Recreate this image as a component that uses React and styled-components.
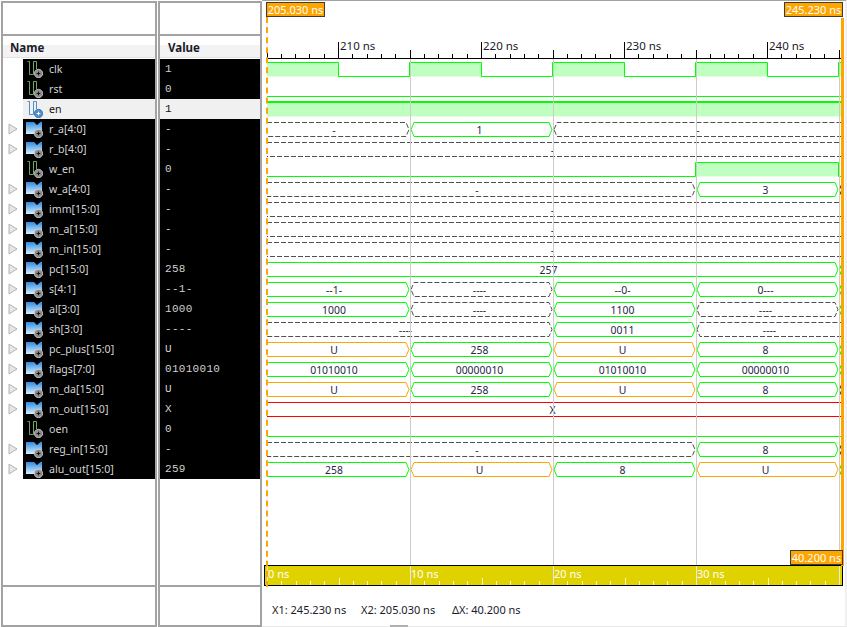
import React from "react"
import styled, { createGlobalStyle } from "styled-components"

const GlobalStyle = createGlobalStyle`
  html, body { margin: 0; padding: 0; background: #fff; }
`

const UI_FONT = `"Noto Sans", "Open Sans", sans-serif`
const GREEN = "#00ff00"
const ORANGE = "#ffa500"
const RED = "#ff0000"
const DASH = "#505050"

const Page = styled.div`
  position: relative;
  width: 847px;
  height: 627px;
  overflow: hidden;
  display: flex;
  font-family: ${UI_FONT};
  background: #fff;
`

const Pane = styled.div`
  box-sizing: border-box;
  flex: none;
  width: ${props => props.$width}px;
  height: 626px;
  margin: 1px ${props => props.$right}px 0 ${props => props.$left}px;
  border: 2px solid #a3a3a3;
  display: flex;
  flex-direction: column;
`

const PaneTop = styled.div`
  height: 31px;
  border-bottom: 2px solid #a3a3a3;
`

const PaneHeader = styled.div`
  box-sizing: border-box;
  height: 23px;
  padding: 3px 0 0 ${props => props.$indent}px;
  font-size: 11.5px;
  line-height: 17px;
  font-weight: 700;
  color: #1a1a2a;
  background: linear-gradient(#fff 0 9px, #f3f3f3 9px 21px, #e2e2e2 21px 22px, #fff 22px);
`

const List = styled.div`
  flex: 1;
`

const PaneFoot = styled.div`
  height: 38px;
  border-top: 2px solid #a3a3a3;
`

const Row = styled.div`
  display: flex;
  height: 20px;
`

const Expander = styled.div`
  width: 20px;
  display: flex;
  align-items: center;
  padding-left: 5px;
  box-sizing: border-box;
`

const NameCell = styled.div`
  flex: 1;
  display: flex;
  align-items: center;
  gap: 6px;
  padding-left: 3px;
  font-size: 10.6px;
  line-height: 18px;
  background: ${props => (props.$selected ? "#f0f0f0" : "#000")};
  color: ${props => (props.$selected ? "#101010" : "#d4d4d4")};
`

const NameText = styled.span`
  margin-top: -1px;
`

const ValueCell = styled.div`
  height: 20px;
  padding-left: 5px;
  font-family: "Liberation Mono", "DejaVu Sans Mono", monospace;
  font-size: 11px;
  letter-spacing: 0.3px;
  line-height: 20px;
  background: ${props => (props.$selected ? "#f0f0f0" : "#000")};
  color: ${props => (props.$selected ? "#101010" : "#d0d0d0")};
`

const WavePane = styled.div`
  position: relative;
  box-sizing: border-box;
  flex: none;
  width: 585px;
  height: 627px;
  border-top: 1px solid #a3a3a3;
  border-right: 2px solid #f0f0f0;
  border-bottom: 1px solid #e8e8e8;
  display: flex;
  flex-direction: column;
`

const Drawing = styled.svg`
  display: block;
  flex: none;
  font-family: ${UI_FONT};
`

const Status = styled.div`
  flex: 1;
  display: flex;
  padding: 16px 0 0 10px;
  font-size: 11px;
  line-height: 16px;
  color: #1a1a2a;
  white-space: nowrap;
`

const StatusItem = styled.span`
  width: ${props => props.$width}px;
  flex: none;
`

const CursorTag = styled.div`
  position: absolute;
  box-sizing: border-box;
  top: ${props => props.$top}px;
  left: ${props => props.$left}px;
  width: ${props => props.$width}px;
  height: 15px;
  border: 1px solid #3c3c3c;
  background: ${ORANGE};
  color: #fff;
  font-size: 11px;
  line-height: 13px;
  text-align: center;
  white-space: nowrap;
`

const Cursor = styled.div`
  position: absolute;
  left: ${props => props.$left}px;
  top: ${props => props.$top}px;
  height: ${props => props.$height}px;
  width: 0;
  border-left: ${props => props.$size}px ${props => props.$kind} ${ORANGE};
`

const Grip = styled.div`
  position: absolute;
  left: 128px;
  bottom: -1px;
  width: 18px;
  height: 2px;
  background: #b0b0b0;
`

const ChevronIcon = () => (
  <svg width="10" height="12" viewBox="0 0 10 12">
    <path d="M1 1 L9 6 L1 11 Z" fill="#e6e6e6" stroke="#b4b4b4" />
  </svg>
)

const Disc = ({ blue }) => (
  <g>
    <circle cx="12.5" cy="12.5" r="4.2" fill={blue ? "#4f8fd0" : "#8c8c8c"} stroke={blue ? "#2f6fb0" : "#d0d0d0"} strokeWidth="0.8" />
    <path d="M10.7 12.5 H14.3 M12.5 10.7 V14.3" stroke={blue ? "#fff" : "#101010"} strokeWidth="1" />
  </g>
)

const PulseIcon = ({ blue }) => (
  <svg width="17" height="17" viewBox="0 0 17 17">
    <path
      d="M1.5 0.5 H3.5 V13.5 H7.5 V0.5 H10.5 V8"
      fill="none"
      stroke={blue ? "#4f8fc8" : "#6fa562"}
    />
    <Disc blue={blue} />
  </svg>
)

const BusIcon = () => (
  <svg width="17" height="17" viewBox="0 0 17 17">
    <defs>
      <linearGradient id="busBlue" x1="0" y1="0" x2="0" y2="1">
        <stop offset="0" stopColor="#2a86dc" />
        <stop offset="1" stopColor="#d8f0ff" />
      </linearGradient>
    </defs>
    <path d="M0 1 H8 L11 4 L15 0.5 L16 1 V13 H0 Z" fill="url(#busBlue)" />
    <Disc />
  </svg>
)

const signals = [
  { name: "clk", value: "1", icon: "pulse" },
  { name: "rst", value: "0", icon: "pulse" },
  { name: "en", value: "1", icon: "pulse", selected: true },
  { name: "r_a[4:0]", value: "-", icon: "bus" },
  { name: "r_b[4:0]", value: "-", icon: "bus" },
  { name: "w_en", value: "0", icon: "pulse" },
  { name: "w_a[4:0]", value: "-", icon: "bus" },
  { name: "imm[15:0]", value: "-", icon: "bus" },
  { name: "m_a[15:0]", value: "-", icon: "bus" },
  { name: "m_in[15:0]", value: "-", icon: "bus" },
  { name: "pc[15:0]", value: "258", icon: "bus" },
  { name: "s[4:1]", value: "--1-", icon: "bus" },
  { name: "al[3:0]", value: "1000", icon: "bus" },
  { name: "sh[3:0]", value: "----", icon: "bus" },
  { name: "pc_plus[15:0]", value: "U", icon: "bus" },
  { name: "flags[7:0]", value: "01010010", icon: "bus" },
  { name: "m_da[15:0]", value: "U", icon: "bus" },
  { name: "m_out[15:0]", value: "X", icon: "bus" },
  { name: "oen", value: "0", icon: "pulse" },
  { name: "reg_in[15:0]", value: "-", icon: "bus" },
  { name: "alu_out[15:0]", value: "259", icon: "bus" }
]

// x of the clock periods, everything on screen is in page coordinates
const GRID = [410.5, 553.5, 696.5, 839.5]
const EDGE_START = 267
const EDGE_END = 842

const seg = (from, to, kind, label) => ({ from, to, kind, label })

// from/to are indexes: 0 = left cursor, 1..3 = grid lines, 4 = right edge closed, 5 = open end
const waves = [
  { type: "clock" },
  { type: "low" },
  { type: "high" },
  { type: "bus", segs: [seg(0, 1, "d", "-"), seg(1, 2, "g", "1"), seg(2, 5, "d", "-")] },
  { type: "bus", segs: [seg(0, 5, "d", "-")] },
  { type: "late" },
  { type: "bus", segs: [seg(0, 3, "d", "-"), seg(3, 4, "g", "3")], tip: "d" },
  { type: "bus", segs: [seg(0, 5, "d", "-")] },
  { type: "bus", segs: [seg(0, 5, "d", "-")] },
  { type: "bus", segs: [seg(0, 5, "d", "-")] },
  { type: "bus", segs: [seg(0, 4, "g", "257")], tip: "g" },
  { type: "bus", segs: [seg(0, 1, "g", "--1-"), seg(1, 2, "d", "----"), seg(2, 3, "g", "--0-"), seg(3, 4, "g", "0---")], tip: "g" },
  { type: "bus", segs: [seg(0, 1, "g", "1000"), seg(1, 2, "d", "----"), seg(2, 3, "g", "1100"), seg(3, 4, "d", "----")], tip: "g" },
  { type: "bus", segs: [seg(0, 2, "d", "----"), seg(2, 3, "g", "0011"), seg(3, 5, "d", "----")] },
  { type: "bus", segs: [seg(0, 1, "o", "U"), seg(1, 2, "g", "258"), seg(2, 3, "o", "U"), seg(3, 4, "g", "8")], tip: "g" },
  { type: "bus", segs: [seg(0, 1, "g", "01010010"), seg(1, 2, "g", "00000010"), seg(2, 3, "g", "01010010"), seg(3, 4, "g", "00000010")], tip: "g" },
  { type: "bus", segs: [seg(0, 1, "o", "U"), seg(1, 2, "g", "258"), seg(2, 3, "o", "U"), seg(3, 4, "g", "8")], tip: "d" },
  { type: "bus", segs: [seg(0, 5, "r", "X")] },
  { type: "low" },
  { type: "bus", segs: [seg(0, 3, "d", "-"), seg(3, 4, "g", "8")], tip: "d" },
  { type: "bus", segs: [seg(0, 1, "g", "258"), seg(1, 2, "o", "U"), seg(2, 3, "g", "8"), seg(3, 4, "o", "U")], tip: "g" }
]

const COLORS = { g: GREEN, o: ORANGE, r: RED, d: DASH }

const BusSegment = ({ top, bottom, s }) => {
  const mid = (top + bottom) / 2
  const first = s.from === 0
  const open = s.to === 5
  const x1 = first ? EDGE_START : GRID[s.from - 1] + 0.5
  const x2 = open ? EDGE_END : GRID[s.to - 1] - 1.5
  const left = first ? x1 : x1 + 3
  const right = open ? x2 : x2 - 3
  const leftEnd = first ? `M${left} ${top}` : `M${x1} ${mid} L${left} ${top}`
  const rightEnd = open ? `M${right} ${bottom}` : `L${x2} ${mid} L${right} ${bottom}`
  const closeEnd = first ? "" : `L${x1} ${mid}`
  const d = `${leftEnd} H${right} ${rightEnd} H${left} ${closeEnd}`
  const shift = open ? (first ? -2 : 0) : first ? -4 : -2
  return (
    <g>
      <path
        d={d}
        fill="none"
        stroke={COLORS[s.kind]}
        strokeDasharray={s.kind === "d" ? "5 2" : undefined}
      />
      <text
        x={(x1 + x2) / 2 + shift}
        y={top + 11}
        textAnchor="middle"
        fontSize="10.4"
        fill="#26264a"
      >
        {s.label}
      </text>
    </g>
  )
}

const Wave = ({ wave, index }) => {
  const top = 62.5 + index * 20
  const bottom = top + 14
  const mid = (top + bottom) / 2
  if (wave.type === "low") {
    return <path d={`M${EDGE_START} ${bottom} H${EDGE_END}`} stroke={GREEN} />
  }
  if (wave.type === "high") {
    return (
      <g>
        <rect x={EDGE_START} y={top} width={EDGE_END - EDGE_START} height={14} fill="#bfffbf" />
        <path d={`M${EDGE_START} ${top - 0.5} H${EDGE_END}`} stroke={GREEN} strokeWidth="2" />
      </g>
    )
  }
  if (wave.type === "late") {
    return (
      <g>
        <rect x={695.5} y={top} width={143} height={14} fill="#bfffbf" />
        <path
          d={`M${EDGE_START} ${bottom} H695.5 V${top} H838.5 V${bottom} H${EDGE_END}`}
          fill="none"
          stroke={GREEN}
        />
      </g>
    )
  }
  if (wave.type === "clock") {
    const edges = [338.5, 409.5, 481.5, 552.5, 624.5, 695.5, 767.5, 838.5]
    const highs = [
      [EDGE_START, 338.5],
      [409.5, 481.5],
      [552.5, 624.5],
      [695.5, 767.5],
      [838.5, EDGE_END]
    ]
    let d = `M${EDGE_START} ${top}`
    edges.forEach((x, i) => {
      d += ` H${x} V${i % 2 === 0 ? bottom : top}`
    })
    d += ` H${EDGE_END}`
    return (
      <g>
        {highs.map(([a, b]) => (
          <rect key={a} x={a} y={top} width={b - a} height={14} fill="#bfffbf" />
        ))}
        <path d={d} fill="none" stroke={GREEN} />
      </g>
    )
  }
  return (
    <g>
      {wave.segs.map((s, i) => (
        <BusSegment key={i} top={top} bottom={bottom} s={s} />
      ))}
      {wave.tip && (
        <path
          d={`M840.5 ${mid - 4} V${mid - 1} M840.5 ${mid + 2} V${mid + 5}`}
          stroke={COLORS[wave.tip]}
        />
      )}
    </g>
  )
}

const tickRange = (from, to) => {
  const out = []
  for (let ns = from; ns <= to; ns++) out.push(ns)
  return out
}

const Ruler = () => {
  // 14.3px per ns, 210 ns sits at x=338.5
  const ticks = tickRange(205, 245)
  return (
    <Drawing width="583" height="58" viewBox="262 1 583 58">
      <path d="M267 58.5 H842" stroke="#000" />
      {ticks.map(ns => {
        const x = Math.round(338 + (ns - 210) * 14.3) + 0.5
        const major = ns % 10 === 0
        const mid = ns % 5 === 0
        return (
          <path
            key={ns}
            d={`M${x} ${major ? 42 : mid ? 50 : 54} V58`}
            stroke="#000"
          />
        )
      })}
      {[210, 220, 230, 240].map(ns => (
        <text
          key={ns}
          x={Math.round(338 + (ns - 210) * 14.3) + 2}
          y={50}
          fontSize="11.5"
          fill="#1a1a2a"
        >
          {ns} ns
        </text>
      ))}
    </Drawing>
  )
}

const Waves = () => (
  <Drawing width="583" height="506" viewBox="262 59 583 506">
    {waves.map((wave, i) => (
      <Wave key={i} wave={wave} index={i} />
    ))}
    {GRID.map(x => (
      <path key={x} d={`M${x} 59 V565`} stroke="#cccccc" />
    ))}
  </Drawing>
)

const Overview = () => {
  const ticks = tickRange(0, 40)
  return (
    <Drawing width="583" height="21" viewBox="262 565 583 21">
      <rect x="264.5" y="565.5" width="578" height="20" fill="#e0d200" stroke="#000" />
      {ticks.map(ns => {
        const x = Math.round(267 + ns * 14.3) + 0.5
        const major = ns % 10 === 0
        const mid = ns % 5 === 0
        return (
          <path
            key={ns}
            d={`M${x} ${major ? 566 : mid ? 578 : 581} V585`}
            stroke={major ? "#e8e8e8" : "#fff8c8"}
          />
        )
      })}
      {[0, 10, 20, 30].map(ns => (
        <text key={ns} x={268 + ns * 14.3} y={578} fontSize="11" fill="#ffffff">
          {ns} ns
        </text>
      ))}
    </Drawing>
  )
}

const App = () => (
  <Page>
    <GlobalStyle />
    <Pane $width={156} $left={1} $right={1}>
      <PaneTop />
      <PaneHeader $indent={7}>Name</PaneHeader>
      <List>
        {signals.map(s => (
          <Row key={s.name}>
            <Expander>{s.icon === "bus" && <ChevronIcon />}</Expander>
            <NameCell $selected={s.selected}>
              {s.icon === "bus" ? <BusIcon /> : <PulseIcon blue={s.selected} />}
              <NameText>{s.name}</NameText>
            </NameCell>
          </Row>
        ))}
      </List>
      <PaneFoot />
    </Pane>
    <Pane $width={104} $left={0} $right={0}>
      <PaneTop />
      <PaneHeader $indent={8}>Value</PaneHeader>
      <List>
        {signals.map(s => (
          <ValueCell key={s.name} $selected={s.selected}>
            {s.value}
          </ValueCell>
        ))}
      </List>
      <PaneFoot />
    </Pane>
    <WavePane>
      <Ruler />
      <Waves />
      <Overview />
      <Status>
        <StatusItem $width={89}>X1: 245.230 ns</StatusItem>
        <StatusItem $width={91}>X2: 205.030 ns</StatusItem>
        <StatusItem $width={70}>ΔX: 40.200 ns</StatusItem>
      </Status>
      <Cursor $left={4} $top={16} $height={570} $size={2} $kind="dashed" />
      <Cursor $left={579} $top={17} $height={548} $size={3} $kind="solid" />
      <CursorTag $left={4} $top={1} $width={59}>205.030 ns</CursorTag>
      <CursorTag $left={522} $top={1} $width={59}>245.230 ns</CursorTag>
      <CursorTag $left={528} $top={549} $width={53}>40.200 ns</CursorTag>
      <Grip />
    </WavePane>
  </Page>
)

export default App
